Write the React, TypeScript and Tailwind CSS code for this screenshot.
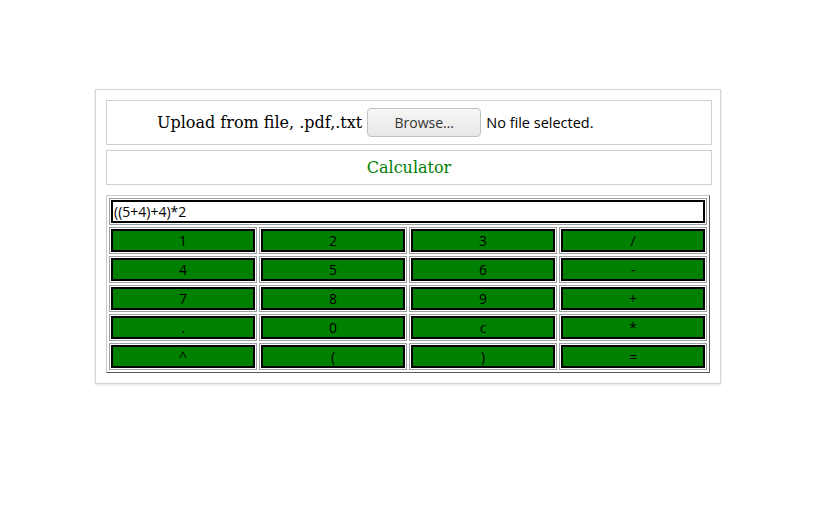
import React from "react";

const keys = ["1", "2", "3", "/", "4", "5", "6", "-", "7", "8", "9", "+", ".", "0", "c", "*", "^", "(", ")", "="];

export default function App() {
  return (
    <div className="w-[826px] h-[527px] bg-white relative" style={{ fontFamily: "'Open Sans', sans-serif" }}>
      <div className="pt-[89px] pl-[95px]">
        <div className="w-[626px] h-[295px] border border-[#d4d4d4] shadow-[0_1px_2px_rgba(0,0,0,0.12)] pt-[10px] pl-[10px]">
          <div className="w-[606px] h-[45px] border border-[#d0d0d0] flex items-center pl-[50px]">
            <span className="text-[16px] text-black mr-[5px]" style={{ fontFamily: "'DejaVu Serif', serif" }}>
              Upload from file, .pdf,.txt
            </span>
            <button className="w-[114px] h-[29px] rounded-[4px] border border-[#c2c2c2] bg-gradient-to-b from-[#f7f7f6] to-[#e8e7e5] text-[14px] text-[#333] leading-none">
              Browse…
            </button>
            <span className="ml-[5px] text-[14.5px] text-black">No file selected.</span>
          </div>
          <div className="w-[606px] h-[35px] mt-[5px] border border-[#d0d0d0] flex items-center justify-center">
            <span className="text-[16px] text-[#008000]" style={{ fontFamily: "'DejaVu Serif', serif" }}>
              Calculator
            </span>
          </div>
          <div className="w-[604px] mt-[10px] border border-t-[#c8c8c8] border-l-[#c8c8c8] border-r-[#5a5a5a] border-b-[#5a5a5a] p-[2px] grid grid-cols-4 gap-[2px]">
            <div className="col-span-4 h-[27px] border border-[#a0a0a0] p-[1px]">
              <div className="h-[23px] border-2 border-black bg-white flex items-center pl-[1px] text-[14px] text-black leading-none">
                ((5+4)+4)*2
              </div>
            </div>
            {keys.map((k) => (
              <div key={k} className="h-[27px] border border-[#a0a0a0] p-[1px]">
                <button className="w-full h-[23px] border-2 border-black bg-[#008000] text-[14px] text-black leading-none flex items-center justify-center pt-[1px]">
                  {k}
                </button>
              </div>
            ))}
          </div>
        </div>
      </div>
    </div>
  );
}
